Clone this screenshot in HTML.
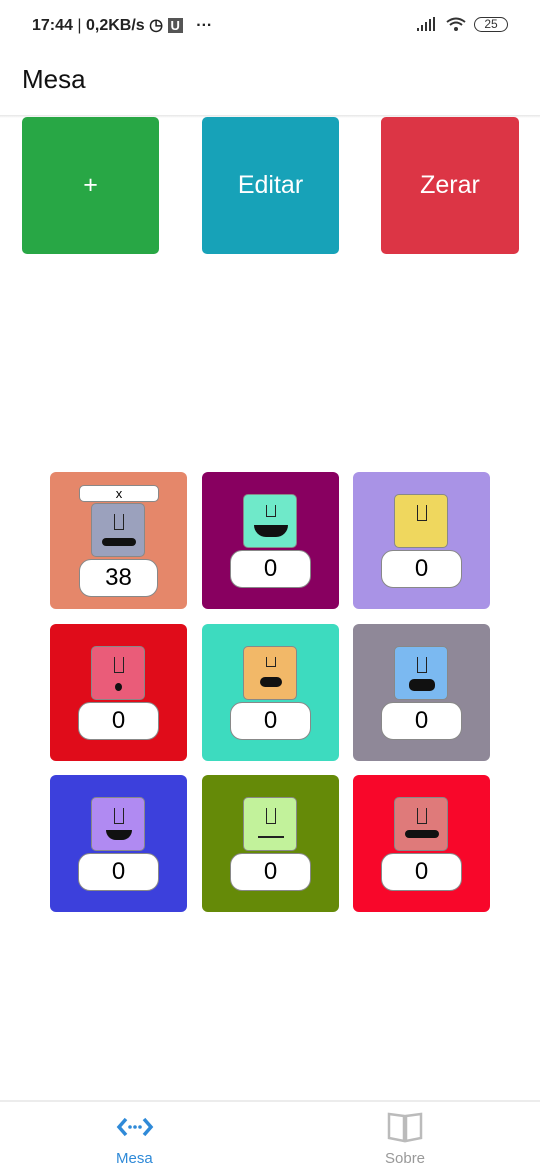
<!DOCTYPE html>
<html><head><style>
*{margin:0;padding:0;box-sizing:border-box}
body{width:540px;height:1170px;background:#fff;font-family:"Liberation Sans",sans-serif;position:relative;overflow:hidden}
.abs{position:absolute}
.btn{position:absolute;top:117px;width:137px;height:137px;border-radius:5px;color:#fff;font-size:25px;display:flex;align-items:center;justify-content:center}
.tile{position:absolute;width:137px;height:137px;border-radius:6px}
.face{position:absolute;left:41px;top:22px;width:54px;height:54px;border-radius:5px;border:1px solid #888}
.cnt{position:absolute;left:28px;top:78px;width:81px;height:38px;background:#fff;border:1.5px solid #888;border-radius:12px;font-size:24px;text-align:center;line-height:36px;color:#000}
.mouth{position:absolute;left:10px;top:34px;width:34px;height:10px;background:#111;border-radius:5px}
.nose{position:absolute;left:22px;top:10px;width:10px;height:16px;border:1.5px solid #222;border-top:none}
</style></head><body>
<div class="abs" style="left:32px;top:15px;font-size:16px;font-weight:bold;color:#222">17:44 <span style="font-weight:normal">|</span> 0,2KB/s ◷ <span style="background:#555;color:#fff;padding:0 3px;font-size:13px">U</span> &nbsp; ···</div>
<svg class="abs" style="left:416px;top:16px" width="54" height="18" viewBox="0 0 54 18"><rect x="1" y="12" width="2" height="3" fill="#333"/><rect x="5" y="9" width="2" height="6" fill="#333"/><rect x="9" y="6" width="2" height="9" fill="#333"/><rect x="13" y="3" width="2" height="12" fill="#333"/><rect x="17" y="1" width="2" height="14" fill="#333"/><path d="M31 6 Q40 -1 49 6 M34 9 Q40 4 46 9" stroke="#333" stroke-width="2" fill="none"/><circle cx="40" cy="13" r="2" fill="#333"/></svg>
<div class="abs" style="left:474px;top:17px;width:34px;height:15px;border:1.5px solid #333;border-radius:8px;font-size:12px;text-align:center;line-height:12px;color:#333">25</div>
<div class="abs" style="left:22px;top:64px;font-size:26px;color:#111">Mesa</div>
<div class="abs" style="left:0;top:115px;width:540px;height:3px;background:linear-gradient(#e6e6e6,#fff)"></div>
<div class="btn" style="left:22px;background:#28a745">+</div>
<div class="btn" style="left:202px;background:#17a2b8">Editar</div>
<div class="btn" style="left:381px;width:138px;background:#dc3545">Zerar</div>

<div class="tile" style="left:50px;top:472px;background:#e5876a">
 <div class="abs" style="left:29px;top:13px;width:80px;height:17px;background:#fff;border:1px solid #888;border-radius:5px;font-size:13px;text-align:center;line-height:15px">x</div>
 <div class="face" style="top:31px;background:#9ba1bd"><div class="nose"></div><div class="mouth" style="height:8px"></div></div>
 <div class="cnt" style="top:87px;left:29px;width:79px">38</div>
</div>
<div class="tile" style="left:202px;top:472px;background:#880060"><div class="face" style="background:#6fe9c9"><div class="nose" style="height:12px"></div><div class="mouth" style="top:30px;height:12px;border-radius:0 0 17px 17px"></div></div><div class="cnt">0</div></div>
<div class="tile" style="left:353px;top:472px;background:#a993e6"><div class="face" style="background:#efd75e"><div class="nose"></div></div><div class="cnt">0</div></div>

<div class="tile" style="left:50px;top:624px;background:#e00c1a"><div class="face" style="background:#ea5c79"><div class="nose"></div><div class="abs" style="left:23px;top:36px;width:7px;height:8px;border-radius:50%;background:#111"></div></div><div class="cnt">0</div></div>
<div class="tile" style="left:202px;top:624px;background:#3ddbbf"><div class="face" style="background:#f2b868"><div class="nose" style="height:10px"></div><div class="mouth" style="left:16px;width:22px;top:30px"></div></div><div class="cnt">0</div></div>
<div class="tile" style="left:353px;top:624px;background:#8f8898"><div class="face" style="background:#7bb9f1"><div class="nose"></div><div class="mouth" style="left:14px;width:26px;top:32px;height:12px"></div></div><div class="cnt">0</div></div>

<div class="tile" style="left:50px;top:775px;background:#3c40dc"><div class="face" style="background:#b08af2"><div class="nose"></div><div class="mouth" style="left:14px;width:26px;top:32px;height:10px;border-radius:0 0 13px 13px"></div></div><div class="cnt">0</div></div>
<div class="tile" style="left:202px;top:775px;background:#658a08"><div class="face" style="background:#c2f29b"><div class="nose"></div><div class="abs" style="left:14px;top:38px;width:26px;height:2px;background:#222"></div></div><div class="cnt">0</div></div>
<div class="tile" style="left:353px;top:775px;background:#f8072a"><div class="face" style="background:#df7a7a"><div class="nose"></div><div class="mouth" style="top:32px;height:8px"></div></div><div class="cnt">0</div></div>

<div class="abs" style="left:0;top:1100px;width:540px;height:2px;background:#ececec"></div>
<svg class="abs" style="left:116px;top:1113px" width="38" height="28" viewBox="0 0 38 28"><path d="M10 6 L3 14 L10 22 M28 6 L35 14 L28 22" stroke="#2f8ad8" stroke-width="3.5" fill="none"/><circle cx="14" cy="14" r="1.8" fill="#2f8ad8"/><circle cx="19" cy="14" r="1.8" fill="#2f8ad8"/><circle cx="24" cy="14" r="1.8" fill="#2f8ad8"/></svg>
<div class="abs" style="left:116px;top:1150px;font-size:15px;color:#2f8ad8">Mesa</div>
<svg class="abs" style="left:387px;top:1111px" width="36" height="32" viewBox="0 0 36 32"><path d="M2 3 L17 5 L17 30 L2 27 Z M34 3 L19 5 L19 30 L34 27 Z" stroke="#bbb" stroke-width="2.5" fill="none"/></svg>
<div class="abs" style="left:385px;top:1150px;font-size:15px;color:#999">Sobre</div>
</body></html>
